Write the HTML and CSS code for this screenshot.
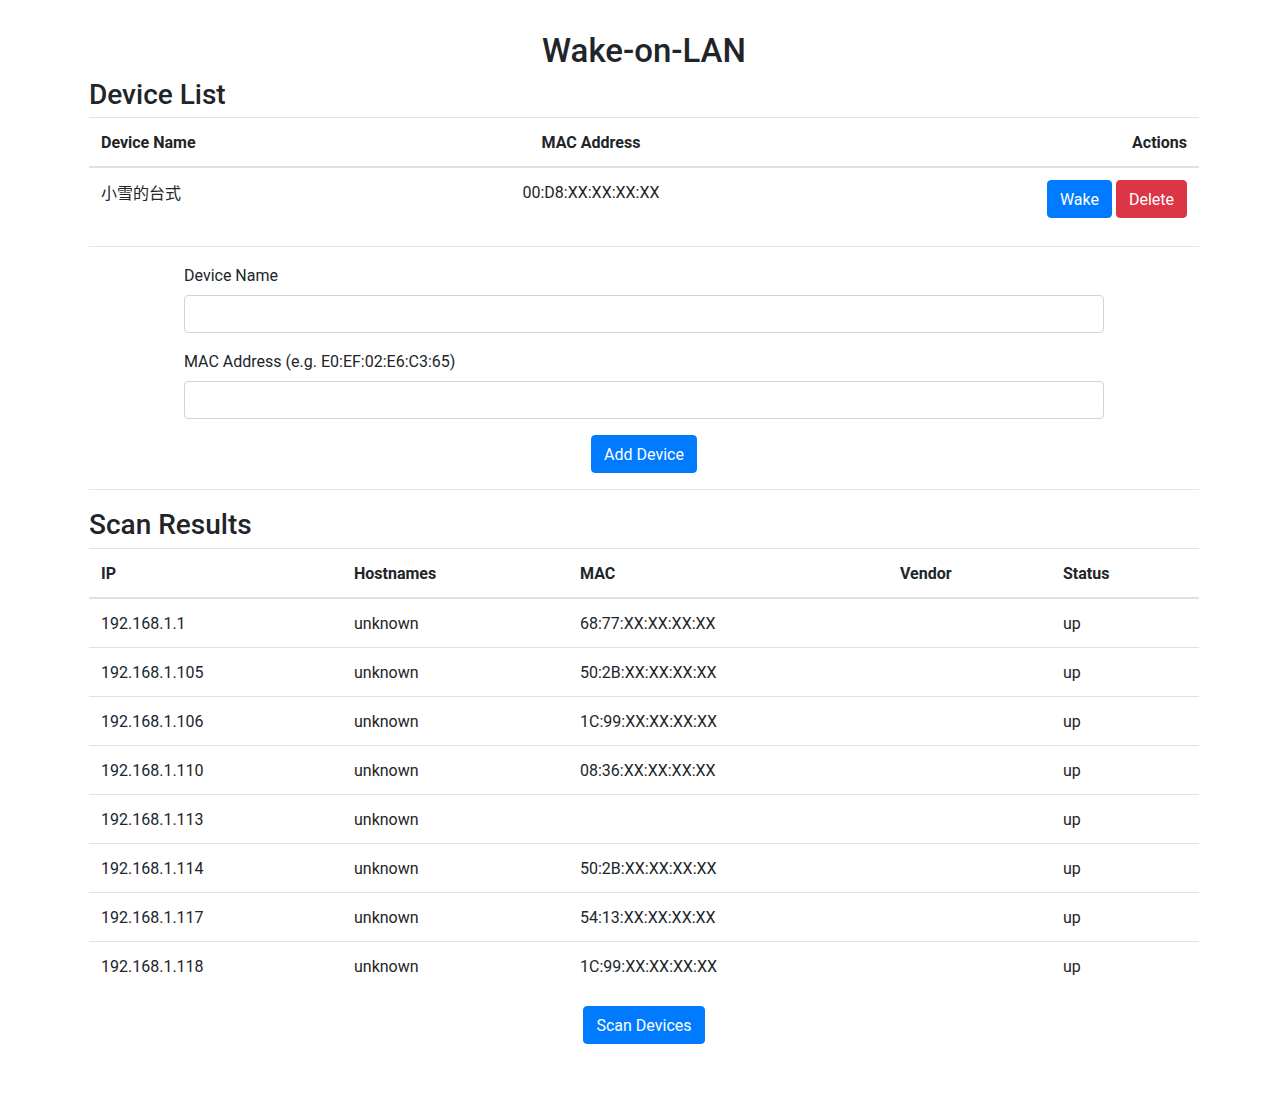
FILE: index.html
```html
<!DOCTYPE html>
<html lang="en">
<head>
<meta charset="utf-8">
<title>Wake-on-LAN</title>
<link rel="stylesheet" href="styles.css">
</head>
<body>
<div class="container">
  <h1 class="title">Wake-on-LAN</h1>
  <h2 class="section-title">Device List</h2>
  <table class="table device-table">
    <colgroup>
      <col class="dc-name"><col class="dc-mac"><col class="dc-actions">
    </colgroup>
    <thead>
      <tr>
        <th>Device Name</th>
        <th class="center">MAC Address</th>
        <th class="right">Actions</th>
      </tr>
    </thead>
    <tbody>
      <tr>
        <td class="cjk">小雪的台式</td>
        <td class="center">00:D8:XX:XX:XX:XX</td>
        <td class="right actions"><button class="btn btn-primary">Wake</button> <button class="btn btn-danger">Delete</button></td>
      </tr>
    </tbody>
  </table>
  <hr class="divider">
  <form class="device-form">
    <div class="form-group">
      <label class="form-label" for="name">Device Name</label>
      <input class="form-control" id="name" type="text">
    </div>
    <div class="form-group">
      <label class="form-label" for="mac">MAC Address (e.g. E0:EF:02:E6:C3:65)</label>
      <input class="form-control" id="mac" type="text">
    </div>
    <div class="text-center">
      <button type="button" class="btn btn-primary">Add Device</button>
    </div>
  </form>
  <hr class="divider">
  <h2 class="section-title scan-title">Scan Results</h2>
  <table class="table scan-table">
    <colgroup>
      <col class="sc-ip"><col class="sc-host"><col class="sc-mac"><col class="sc-vendor"><col class="sc-status">
    </colgroup>
    <thead>
      <tr><th>IP</th><th>Hostnames</th><th>MAC</th><th>Vendor</th><th>Status</th></tr>
    </thead>
    <tbody>
      <tr><td>192.168.1.1</td><td>unknown</td><td>68:77:XX:XX:XX:XX</td><td></td><td>up</td></tr>
      <tr><td>192.168.1.105</td><td>unknown</td><td>50:2B:XX:XX:XX:XX</td><td></td><td>up</td></tr>
      <tr><td>192.168.1.106</td><td>unknown</td><td>1C:99:XX:XX:XX:XX</td><td></td><td>up</td></tr>
      <tr><td>192.168.1.110</td><td>unknown</td><td>08:36:XX:XX:XX:XX</td><td></td><td>up</td></tr>
      <tr><td>192.168.1.113</td><td>unknown</td><td></td><td></td><td>up</td></tr>
      <tr><td>192.168.1.114</td><td>unknown</td><td>50:2B:XX:XX:XX:XX</td><td></td><td>up</td></tr>
      <tr><td>192.168.1.117</td><td>unknown</td><td>54:13:XX:XX:XX:XX</td><td></td><td>up</td></tr>
      <tr><td>192.168.1.118</td><td>unknown</td><td>1C:99:XX:XX:XX:XX</td><td></td><td>up</td></tr>
    </tbody>
  </table>
  <div class="text-center">
    <button type="button" class="btn btn-primary">Scan Devices</button>
  </div>
</div>
</body>
</html>
```
FILE: styles.css
```css
* { box-sizing: border-box; }

html, body { background: #fff; }

body {
  margin: 0;
  font-family: Roboto, "Noto Sans CJK SC", sans-serif;
  font-size: 16px;
  line-height: 1.5;
  color: #212529;
}

.container {
  width: 1110px;
  margin-left: 89px;
  padding-bottom: 40px;
}

.title {
  margin: 31px 0 5px;
  font-size: 33px;
  font-weight: 500;
  line-height: 1.2;
  text-align: center;
}

.section-title {
  margin: 0 0 6px;
  padding-top: 2px;
  font-size: 28px;
  font-weight: 500;
  line-height: 1.2;
}

.scan-title { margin-bottom: 6.5px; }

.table {
  width: 100%;
  border-collapse: collapse;
  table-layout: fixed;
  margin-bottom: 16px;
}

.table th,
.table td {
  padding: 13px 12px 11px;
  border-top: 1px solid #dee2e6;
  vertical-align: top;
  text-align: left;
}

.table thead th {
  vertical-align: bottom;
  border-bottom: 2px solid #dee2e6;
  font-weight: 700;
}

.table .center { text-align: center; }
.table .right { text-align: right; }
.table .actions { padding: 12px; }

.table .cjk {
  font-family: "Noto Sans CJK SC", Roboto, sans-serif;
  padding: 12px;
}

.dc-name { width: 335px; }
.dc-mac { width: 334px; }
.dc-actions { width: 441px; }

.sc-ip { width: 253px; }
.sc-host { width: 226px; }
.sc-mac { width: 320px; }
.sc-vendor { width: 163px; }
.sc-status { width: 148px; }

.divider {
  margin: 16px 0;
  border: 0;
  border-top: 1px solid rgba(0, 0, 0, 0.1);
  height: 0;
}

.device-form {
  width: 920px;
  margin: 0 auto;
}

.form-group { margin-bottom: 16px; }

.form-label {
  display: inline-block;
  padding-top: 1px;
  margin-bottom: 7px;
}

.form-control {
  display: block;
  width: 100%;
  height: 38px;
  padding: 6px 12px;
  font: inherit;
  color: #495057;
  background: #fff;
  border: 1px solid #ced4da;
  border-radius: 4px;
}

.text-center { text-align: center; }

.btn {
  display: inline-block;
  font-family: inherit;
  font-size: 16px;
  line-height: 1.5;
  font-weight: 400;
  padding: 7px 12px 5px;
  border: 1px solid transparent;
  border-radius: 4px;
  color: #fff;
  vertical-align: middle;
  cursor: pointer;
}

.btn-primary { background: #007bff; border-color: #007bff; }
.btn-danger { background: #dc3545; border-color: #dc3545; }
```
